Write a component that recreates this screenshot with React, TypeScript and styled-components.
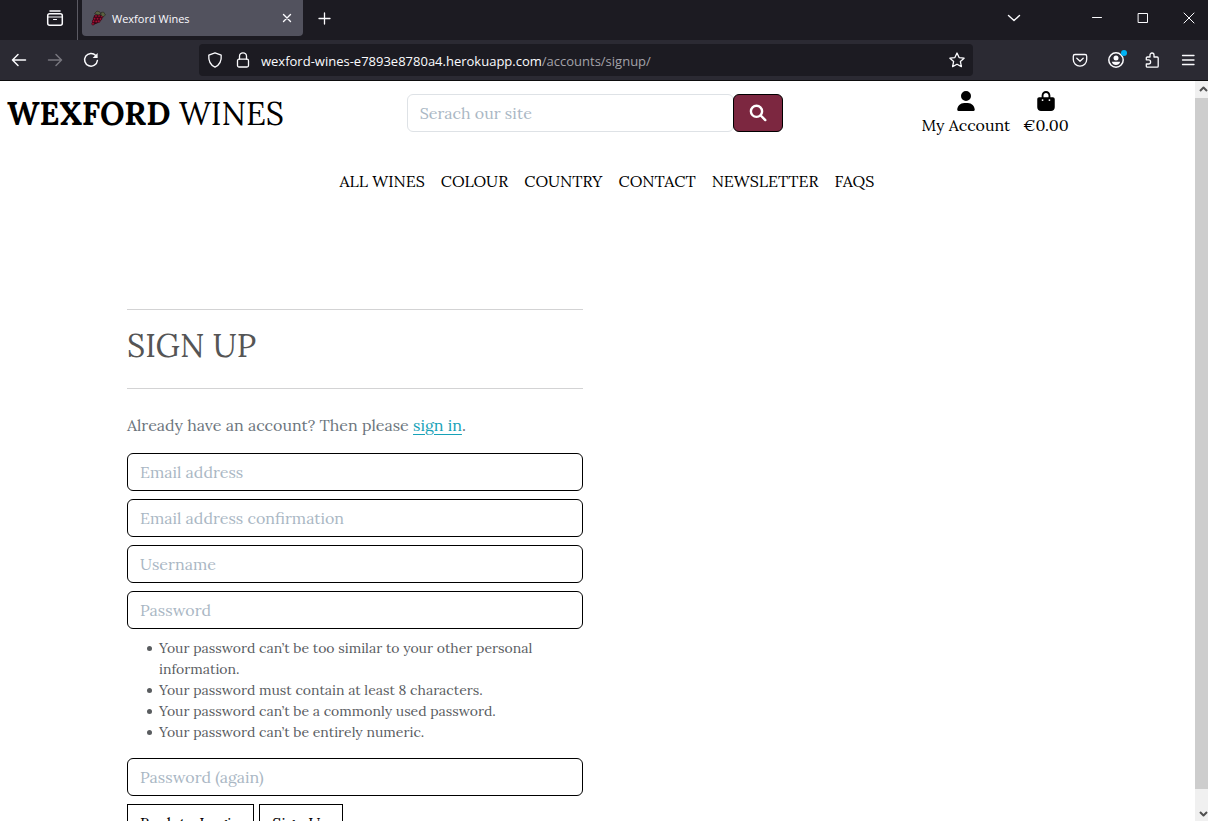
import React from "react";
import styled, { createGlobalStyle } from "styled-components";
import { FaUser, FaBagShopping } from "react-icons/fa6";

const serif = '"Lora", "Liberation Serif", serif';
const ui = '"Segoe UI", "Open Sans", "Noto Sans", sans-serif';

const GlobalStyle = createGlobalStyle`
  *, *::before, *::after { box-sizing: border-box; }
  body { margin: 0; background: #fff; overflow: hidden; }
  button { font: inherit; cursor: pointer; }
`;

const Window = styled.div`
  display: flex;
  flex-direction: column;
  height: 100vh;
  overflow: hidden;
`;

/* ---------- browser chrome ---------- */

const TabStrip = styled.div`
  display: flex;
  flex: none;
  height: 40px;
  padding-left: 37px;
  overflow: hidden;
  background: #1c1b22;
  color: #fbfbfe;
  font-family: ${ui};
`;

const ChromeButton = styled.button<{ $width?: number; $dim?: boolean }>`
  position: relative;
  display: flex;
  flex: none;
  align-items: center;
  justify-content: center;
  width: ${(p) => p.$width ?? 36}px;
  height: 36px;
  padding: 0;
  border: 0;
  background: none;
  color: ${(p) => (p.$dim ? "#77767e" : "#fbfbfe")};
`;

const Separator = styled.div`
  width: 1px;
  margin: 0 4px;
  background: #5b5a63;
`;

const Tab = styled.div`
  display: flex;
  align-items: center;
  gap: 6px;
  width: 221px;
  height: 36px;
  padding: 0 3px 0 8px;
  margin-right: 3px;
  border-radius: 0 0 4px 4px;
  background: #52525e;
  font-size: 11px;
  line-height: 16px;
`;

const TabTitle = styled.span`
  flex: 1;
  padding-top: 2px;
`;

const WindowControls = styled.div`
  display: flex;
  margin: 0 -4px 0 auto;
`;

const CaptionButtons = styled.div`
  display: flex;
  margin-left: 42px;
`;

const Toolbar = styled.div`
  display: flex;
  flex: none;
  align-items: center;
  height: 41px;
  padding: 0 2px 0 1px;
  border-bottom: 1px solid #0c0c0d;
  background: #2b2a33;
  color: #fbfbfe;
`;

const AddressBar = styled.div`
  display: flex;
  flex: 1;
  align-items: center;
  height: 32px;
  min-width: 0;
  margin: 0 89px 0 90px;
  padding-left: 2px;
  border-radius: 4px;
  background: #1c1b22;
  font-family: ${ui};
  font-size: 13px;
  line-height: 20px;
  white-space: nowrap;
`;

const Url = styled.span`
  flex: 1;
  padding-top: 2px;
  margin-left: 4px;
  overflow: hidden;
  color: #fbfbfe;
`;

const UrlPath = styled.span`
  color: #a3a2a9;
`;

const Notice = styled.span`
  position: absolute;
  top: 8px;
  right: 7px;
  width: 6px;
  height: 6px;
  border-radius: 50%;
  background: #00b3f4;
`;

/* ---------- page ---------- */

const Viewport = styled.div`
  display: flex;
  flex: 1;
  min-height: 0;
`;

const Page = styled.div`
  flex: 1;
  min-width: 0;
  padding-right: 5px;
  overflow: hidden;
  background: #fff;
  font-family: ${serif};
  font-size: 16px;
  line-height: 24px;
`;

const Header = styled.header`
  display: grid;
  grid-template-columns: repeat(3, 1fr);
  align-items: center;
  min-height: 64px;
`;

const Brand = styled.a`
  padding: 2px 0 0 7px;
  color: #000;
  font-size: 32px;
  line-height: 40px;
  text-decoration: none;
`;

const Search = styled.form`
  display: flex;
  padding: 0 10px;
`;

const Field = styled.input<{ $soft?: boolean }>`
  display: block;
  width: 100%;
  min-width: 0;
  height: 38px;
  padding: 6px 12px;
  border: 1px solid ${(p) => (p.$soft ? "#dee2e6" : "#000")};
  border-radius: 6px;
  background: #fff;
  color: #212529;
  font: 16px/24px ${serif};
  &::placeholder {
    color: #aab7c4;
    opacity: 1;
  }
`;

const SearchButton = styled.button`
  display: flex;
  flex: none;
  align-items: center;
  justify-content: center;
  width: 50px;
  height: 38px;
  margin-left: -1px;
  padding: 0;
  border: 1px solid #000;
  border-radius: 6px;
  background: #7c2740;
  color: #fff;
`;

const Account = styled.nav`
  display: flex;
  justify-content: center;
  gap: 13px;
  padding: 1px 0 0 7px;
`;

const AccountLink = styled.a`
  display: flex;
  flex-direction: column;
  align-items: center;
  gap: 2px;
  color: #000;
  text-decoration: none;
`;

const MainNav = styled.nav`
  display: flex;
  justify-content: center;
  gap: 16px;
  padding: 24px 0 0 24px;
`;

const NavLink = styled.a`
  color: #000;
  text-decoration: none;
  text-transform: uppercase;
`;

const Container = styled.main`
  max-width: 960px;
  margin: 116px auto 0;
  padding: 0 12px;
`;

const Column = styled.div`
  width: calc(50% - 12px);
`;

const Title = styled.h1`
  margin: 0;
  padding: 17px 0 23px;
  border: solid #d3d3d4;
  border-width: 1px 0;
  color: #555;
  font-size: 32px;
  font-weight: 400;
  line-height: 38px;
`;

const Lead = styled.p`
  margin: 24px 0 16px;
  color: #6c757d;
`;

const InlineLink = styled.a`
  color: #17a2b8;
  text-underline-offset: 3px;
`;

const SignupForm = styled.form`
  display: flex;
  flex-direction: column;
  gap: 8px;
`;

const Hints = styled.ul`
  margin: 1px 0 7px;
  padding-left: 32px;
  color: #595c5f;
  font-size: 14px;
  line-height: 21px;
  list-style: none;
`;

const Hint = styled.li`
  &::before {
    content: "";
    display: inline-block;
    width: 5px;
    height: 5px;
    margin: 0 7px 0 -12px;
    border-radius: 50%;
    background: currentColor;
    vertical-align: 2px;
  }
`;

const Actions = styled.div`
  display: flex;
  gap: 5px;
`;

const ActionButton = styled.button`
  height: 38px;
  padding: 6px 12px;
  border: 1px solid #000;
  background: #fff;
  color: #000;
`;

const Scrollbar = styled.div`
  display: flex;
  flex: none;
  flex-direction: column;
  width: 13px;
  overflow: hidden;
  background: #f0f0f0;
`;

const ScrollArrow = styled.div`
  flex: none;
  width: 17px;
  height: 17px;
`;

const ScrollThumb = styled.div`
  flex: 1;
  margin-bottom: 15px;
  background: #cdcdcd;
`;

/* ---------- icons ---------- */

type IconProps = { children: React.ReactNode; size?: number; stroke?: number };

const Icon = ({ children, size = 16, stroke = 1.3 }: IconProps) => (
  <svg
    width={size}
    height={size}
    viewBox={`0 0 ${size} ${size}`}
    fill="none"
    stroke="currentColor"
    strokeWidth={stroke}
    strokeLinecap="round"
    strokeLinejoin="round"
    aria-hidden="true"
  >
    {children}
  </svg>
);

const grapes = [
  [6, 6], [9, 6], [12, 6.5], [4.6, 8.7], [7.6, 8.8], [10.5, 9], [3.6, 11.2], [6.3, 11.5], [8.8, 11.2], [3, 13.8],
];

const GrapesIcon = () => (
  <svg width="16" height="16" viewBox="0 0 16 16" aria-hidden="true">
    <path d="M4 5.5 8 4l5 1.5-1 3.5-4 4-5 2-1-2Z" fill="#2a0b15" />
    {grapes.map(([x, y]) => (
      <circle key={`${x}-${y}`} cx={x} cy={y} r="1.3" fill="#a50f35" stroke="#3a0715" strokeWidth=".6" />
    ))}
    <path d="M4.500 3.500 7 1l3 1 .8 2-2.600 1Z" fill="#5b6140" stroke="#24251d" strokeWidth=".6" />
    <path d="m11 2.500 2.500-.5 2 3-2.500 1.800-2-1.500Z" fill="#5b6140" stroke="#24251d" strokeWidth=".6" />
  </svg>
);

const navItems = ["All wines", "Colour", "Country", "Contact", "Newsletter", "FAQs"];

const hints = [
  "Your password can’t be too similar to your other personal information.",
  "Your password must contain at least 8 characters.",
  "Your password can’t be a commonly used password.",
  "Your password can’t be entirely numeric.",
];

const LabelledField = ({ label, type = "text" }: { label: string; type?: string }) => (
  <Field type={type} placeholder={label} aria-label={label} />
);

const BrowserChrome = () => (
  <>
    <TabStrip>
      <ChromeButton aria-label="Recent browsing">
        <Icon size={18} stroke={1.5}>
          <path d="M4 2h10" />
          <rect x="1.700" y="4.700" width="14.600" height="11.600" rx="2" />
          <path d="M1.700 8h14.600M7.500 10.500h3" strokeWidth="1.200" />
        </Icon>
      </ChromeButton>
      <Separator />
      <Tab>
        <GrapesIcon />
        <TabTitle>Wexford Wines</TabTitle>
        <ChromeButton $width={26} aria-label="Close tab">
          <Icon size={10} stroke={1.4}>
            <path d="m1.500 1.500 7 7m0-7-7 7" />
          </Icon>
        </ChromeButton>
      </Tab>
      <ChromeButton aria-label="New tab">
        <Icon size={15}>
          <path d="M7.500 2v11M2 7.500h11" />
        </Icon>
      </ChromeButton>
      <WindowControls>
        <ChromeButton aria-label="List all tabs">
          <Icon size={14} stroke={1.4}>
            <path d="m1.500 4.500 5.500 5 5.500-5" />
          </Icon>
        </ChromeButton>
        <CaptionButtons>
          <ChromeButton $width={46} aria-label="Minimize">
            <Icon size={12} stroke={1}>
              <path d="M1.500 5.500h9" />
            </Icon>
          </ChromeButton>
          <ChromeButton $width={46} aria-label="Restore">
            <Icon size={12} stroke={1}>
              <rect x="1.500" y="1.500" width="9" height="9" />
            </Icon>
          </ChromeButton>
          <ChromeButton $width={46} aria-label="Close">
            <Icon size={12} stroke={1}>
              <path d="m1 1 10 10m0-10L1 11" />
            </Icon>
          </ChromeButton>
        </CaptionButtons>
      </WindowControls>
    </TabStrip>
    <Toolbar>
      <ChromeButton aria-label="Back">
        <Icon stroke={1.5}>
          <path d="M14.500 8h-13M7 2.500 1.500 8 7 13.500" />
        </Icon>
      </ChromeButton>
      <ChromeButton $dim aria-label="Forward">
        <Icon stroke={1.5}>
          <path d="M1.500 8h13M9 2.500 14.500 8 9 13.500" />
        </Icon>
      </ChromeButton>
      <ChromeButton aria-label="Reload">
        <Icon stroke={1.5}>
          <path d="M12.800 3.500A6.400 6.400 0 1 0 14.400 8.500" />
          <path d="M14.600 1v5H9.600Z" fill="currentColor" stroke="none" />
        </Icon>
      </ChromeButton>
      <AddressBar>
        <ChromeButton $width={28} aria-label="Tracking protection">
          <Icon>
            <path d="M8 .8 14.200 3.200c.5 5.500-1.500 9.600-6.200 12C3.300 12.800 1.300 8.700 1.800 3.200Z" />
          </Icon>
        </ChromeButton>
        <ChromeButton $width={28} aria-label="Site information">
          <Icon>
            <rect x="2.500" y="7.200" width="11" height="7.800" rx="1.500" />
            <path d="M4.500 7V4.300a3.500 3.500 0 0 1 7 0V7" />
          </Icon>
        </ChromeButton>
        <Url>
          wexford-wines-e7893e8780a4.herokuapp.com<UrlPath>/accounts/signup/</UrlPath>
        </Url>
        <ChromeButton $width={32} aria-label="Bookmark this page">
          <Icon>
            <path d="m8 1 2.100 4.600 5 .6-3.700 3.400 1 5L8 12.200l-4.400 2.400 1-5L.9 6.200l5-.6Z" />
          </Icon>
        </ChromeButton>
      </AddressBar>
      <ChromeButton aria-label="Save to Pocket">
        <Icon>
          <path d="M3 2.500h10a1.700 1.700 0 0 1 1.700 1.700v3.300a6.700 6.700 0 0 1-13.400 0V4.200A1.700 1.700 0 0 1 3 2.500Z" />
          <path d="m4.800 6.300 3.200 3 3.200-3" />
        </Icon>
      </ChromeButton>
      <ChromeButton aria-label="Account">
        <Icon stroke={1.5}>
          <circle cx="8" cy="8" r="7.200" />
          <circle cx="8" cy="6" r="2.500" fill="currentColor" stroke="none" />
          <path d="M3.800 9.800h8.400c-.6 2.200-2.200 3.200-4.200 3.200s-3.600-1-4.200-3.200Z" fill="currentColor" stroke="none" />
        </Icon>
        <Notice />
      </ChromeButton>
      <ChromeButton aria-label="Extensions">
        <Icon>
          <path d="M2.300 7.500V6a1 1 0 0 1 1-1H6V3a2 2 0 0 1 4 0v2h3.200a1 1 0 0 1 1 1v8.200a1 1 0 0 1-1 1H3.300a1 1 0 0 1-1-1V12h2.200a2 2 0 0 0 0-4.200H2.300" />
        </Icon>
      </ChromeButton>
      <ChromeButton aria-label="Open application menu">
        <Icon>
          <path d="M2.500 3.500h11.500M2.500 8h11.500M2.500 12.500h11.500" />
        </Icon>
      </ChromeButton>
    </Toolbar>
  </>
);

export default function App() {
  return (
    <Window>
      <GlobalStyle />
      <BrowserChrome />
      <Viewport>
        <Page>
          <Header>
            <Brand href="#">
              <strong>WEXFORD</strong> WINES
            </Brand>
            <Search onSubmit={(e) => e.preventDefault()}>
              <Field $soft type="search" placeholder="Serach our site" aria-label="Serach our site" />
              <SearchButton aria-label="Search">
                <Icon size={18} stroke={2.4}>
                  <circle cx="7.500" cy="7.300" r="5.600" />
                  <path d="m11.700 11.500 4.600 4.600" />
                </Icon>
              </SearchButton>
            </Search>
            <Account>
              <AccountLink href="#">
                <FaUser size={20} />
                My Account
              </AccountLink>
              <AccountLink href="#">
                <FaBagShopping size={20} />
                €0.00
              </AccountLink>
            </Account>
          </Header>
          <MainNav>
            {navItems.map((item) => (
              <NavLink key={item} href="#">
                {item}
              </NavLink>
            ))}
          </MainNav>
          <Container>
            <Column>
              <Title>SIGN UP</Title>
              <Lead>
                Already have an account? Then please <InlineLink href="#">sign in</InlineLink>.
              </Lead>
              <SignupForm onSubmit={(e) => e.preventDefault()}>
                <LabelledField type="email" label="Email address" />
                <LabelledField type="email" label="Email address confirmation" />
                <LabelledField label="Username" />
                <LabelledField type="password" label="Password" />
                <Hints>
                  {hints.map((hint) => (
                    <Hint key={hint}>{hint}</Hint>
                  ))}
                </Hints>
                <LabelledField type="password" label="Password (again)" />
                <Actions>
                  <ActionButton type="button">Back to Login</ActionButton>
                  <ActionButton type="submit">Sign Up</ActionButton>
                </Actions>
              </SignupForm>
            </Column>
          </Container>
        </Page>
        <Scrollbar aria-hidden="true">
          <ScrollArrow>
            <Icon size={17} stroke={2}>
              <path d="m5 10 3.500-3.500L12 10" stroke="#505050" strokeLinecap="butt" />
            </Icon>
          </ScrollArrow>
          <ScrollThumb />
          <ScrollArrow>
            <Icon size={17} stroke={2}>
              <path d="m5 8 3.500 3.500L12 8" stroke="#505050" strokeLinecap="butt" />
            </Icon>
          </ScrollArrow>
        </Scrollbar>
      </Viewport>
    </Window>
  );
}
